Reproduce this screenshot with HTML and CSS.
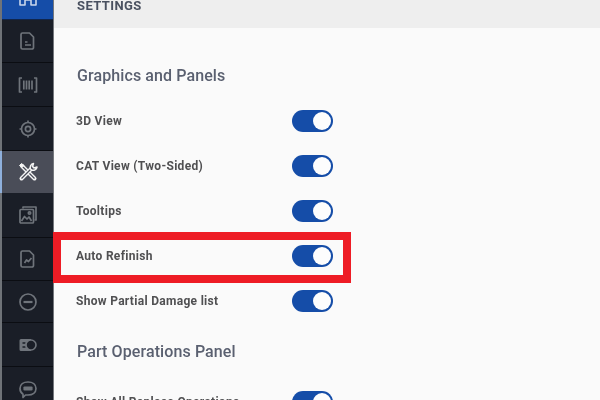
FILE: index.html
```html
<!DOCTYPE html>
<html lang="en">
<head>
<meta charset="utf-8">
<title>Settings</title>
<link rel="stylesheet" href="styles.css">
</head>
<body>
<div class="app">
  <nav class="rail">
    <div class="item first"><svg class="icon light" viewBox="0 0 20 20"><path d="M2 18V6h5v4h6V6h5v12h-5v-5H7v5z"/></svg></div>
    <div class="item h43"><svg class="icon" viewBox="0 0 20 20"><path d="M4.500 2h7l4 4v10.500a1.500 1.500 0 0 1-1.500 1.500H4.500A1.500 1.500 0 0 1 3 16.500v-13A1.500 1.500 0 0 1 4.500 2zM7 11h2.500M7 14h6"/></svg></div>
    <div class="item"><svg class="icon" viewBox="0 0 20 20"><path d="M4 3H1.500v14H4M16 3h2.500v14H16M5.800 5.500v9M8.500 5.500v9M11.200 5.500v9M14 5.500v9"/></svg></div>
    <div class="item"><svg class="icon" viewBox="0 0 20 20"><circle cx="10" cy="10" r="6.500"/><circle cx="10" cy="10" r="2.600"/><path d="M10 1.500v2M10 16.500v2M1.500 10h2M16.500 10h2"/></svg></div>
    <div class="item active"><svg class="icon tools" viewBox="0 0 20 20"><path class="outer" d="M4 4l12.500 12.500"/><path class="inner" d="M4.500 4.500l12 12"/><path class="outer" d="M14 6L3.500 16.500"/><path class="inner" d="M13.500 6.500l-10 10"/><path class="jaw" d="M12.500 7a4 4 0 0 1 3-5.500l-1 3 1.500 1.500 3-1a4 4 0 0 1-5.500 3z"/><path class="tip" d="M1.500 3.500l2-2 2.500 2-2 2z"/></svg></div>
    <div class="item h45"><svg class="icon" viewBox="0 0 20 20"><path d="M5 3.500V2h13v13h-1.500"/><rect x="2" y="4.500" width="13.500" height="13.500" rx="1"/><path d="M3.500 16l3-4.500 2.500 2.500 2-2 2.500 4"/><circle cx="11.500" cy="8" r="1.200"/></svg></div>
    <div class="item h43"><svg class="icon" viewBox="0 0 20 20"><path d="M4.500 2h7l4 4v10.500a1.500 1.500 0 0 1-1.500 1.500H4.500A1.500 1.500 0 0 1 3 16.500v-13A1.500 1.500 0 0 1 4.500 2zM6.500 14l2-3 2 1.500 3-3.500"/></svg></div>
    <div class="item h42"><svg class="icon" viewBox="0 0 20 20"><circle cx="10" cy="10" r="8"/><path class="thick" d="M5.500 10h9"/></svg></div>
    <div class="item"><svg class="icon" viewBox="0 0 20 20"><path class="plate" d="M3 4h10v12H3a1.500 1.500 0 0 1-1.500-1.500v-9A1.500 1.500 0 0 1 3 4z"/><path class="cut" d="M4.500 8h3M4.500 12h3"/><circle class="disc" cx="13" cy="10" r="5"/></svg></div>
    <div class="item"><svg class="icon" viewBox="0 0 20 20"><path d="M10 3c4.500 0 8 2.500 8 6.500S14.500 16 10 16H7.500L5 18.500V15.300C3 14 2 12 2 9.500 2 5.500 5.500 3 10 3z"/><path class="thick" d="M6.500 8.500h7v2h-7z"/></svg></div>
  </nav>
  <main class="panel">
    <header class="bar"><h1 class="bar-title">SETTINGS</h1></header>
    <section class="group first-group">
      <h2 class="group-title">Graphics and Panels</h2>
      <div class="row"><span class="label">3D View</span><span class="toggle"></span></div>
      <div class="row"><span class="label">CAT View (Two-Sided)</span><span class="toggle"></span></div>
      <div class="row"><span class="label">Tooltips</span><span class="toggle"></span></div>
      <div class="row"><span class="label">Auto Refinish</span><span class="toggle"></span></div>
      <div class="row"><span class="label">Show Partial Damage list</span><span class="toggle"></span></div>
    </section>
    <section class="group second-group">
      <h2 class="group-title">Part Operations Panel</h2>
      <div class="row"><span class="label">Show All Replace Operations</span><span class="toggle"></span></div>
    </section>
  </main>
  <div class="callout"></div>
</div>
</body>
</html>
```

FILE: styles.css
```css
* { box-sizing: border-box; }
html, body { margin: 0; height: 100%; overflow: hidden; }
body { font-family: Roboto, "Liberation Sans", sans-serif; background: #fafafa; }
.app { position: relative; display: flex; width: 600px; height: 400px; overflow: hidden; filter: blur(0.5px); }

.rail { flex: 0 0 54px; height: 400px; background: #1a1e27; border-left: 2px solid #6f7378; border-right: 1px solid #74777c; }
.item { display: flex; align-items: center; justify-content: center; height: 44px; border-bottom: 1px solid #0b0d12; }
.item.first { height: 20px; background: #154da8; align-items: flex-end; overflow: hidden; border-bottom-color: #10264d; padding-bottom: 12px; }
.item.h43 { height: 43px; }
.item.h45 { height: 45px; }
.item.h42 { height: 42px; }
.item.active { height: 42px; margin-left: -2px; border-left: 2px solid #8fb0dc; background: #4a4d58; border-bottom: 0; }

.icon { flex: none; width: 20px; height: 20px; fill: none; stroke: #6f747b; stroke-width: 1.700; stroke-linejoin: round; }
.icon.light { stroke: #c9d6ea; stroke-width: 1.600; }
.icon.tools { stroke: #f4f4f4; }
.icon.tools .outer { stroke-width: 4; stroke-linecap: round; }
.icon.tools .inner { stroke: #4a4d58; stroke-width: 1.300; }
.icon.tools .jaw { fill: #4a4d58; stroke-width: 1.500; }
.icon.tools .tip { fill: #f4f4f4; stroke-width: 1; }
.icon .thick { stroke-width: 2.200; }
.icon .plate { fill: #6f747b; stroke: none; }
.icon .cut { stroke: #1a1e27; stroke-width: 1.300; }
.icon .disc { fill: #1a1e27; stroke: #6f747b; stroke-width: 1.600; }

.panel { flex: 1; min-width: 0; }
.bar { height: 28px; background: #eeeeee; padding: 0 0 0 23px; }
.bar-title { margin: 0; font-size: 13px; line-height: 12px; font-weight: 700; letter-spacing: .4px; color: #4a5160; }

.group { padding-left: 22px; }
.first-group { padding-top: 36px; }
.second-group { margin-top: 17px; }
.group-title { margin: 0 0 10px 1px; font-size: 16px; line-height: 24px; font-weight: 500; letter-spacing: .1px; color: #5a6070; }
.second-group .group-title { margin-bottom: 15px; }
.row { display: flex; align-items: center; justify-content: space-between; width: 257px; height: 45px; }
.label { font-size: 12px; font-weight: 700; letter-spacing: .3px; color: #505052; }
.toggle { position: relative; width: 41px; height: 22px; border-radius: 11px; background: #154da8; }
.toggle::after { content: ""; position: absolute; top: 2px; right: 2px; width: 18px; height: 18px; border-radius: 50%; background: #fdfdfd; }

.callout { position: absolute; left: 53px; top: 232px; width: 298px; height: 51px; border: 8px solid #ee1c25; }
```
